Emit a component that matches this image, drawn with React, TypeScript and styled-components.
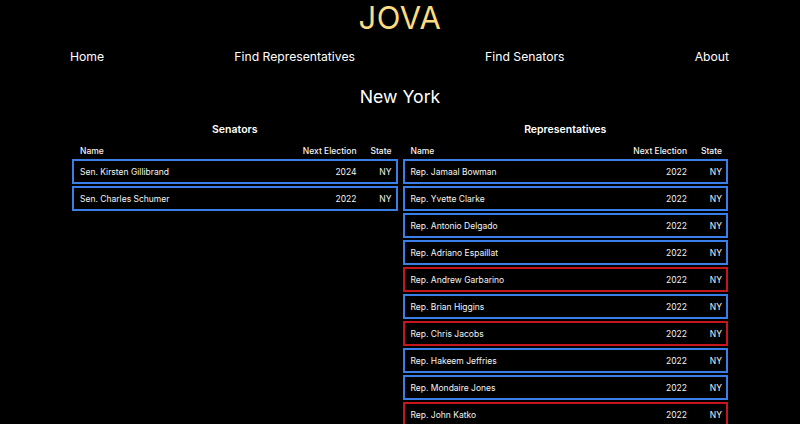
import React from "react";
import styled, { createGlobalStyle } from "styled-components";

const Global = createGlobalStyle`
  html, body { margin: 0; padding: 0; background: #000; }
  body { font-family: Inter, "Liberation Sans", sans-serif; color: #fff; }
`;

const Page = styled.div`
  width: 656px;
  margin: 0 auto;
  display: flex;
  flex-direction: column;
  align-items: stretch;
`;

const Title = styled.h1`
  margin: 0;
  padding-top: 1px;
  text-align: center;
  font-size: 31px;
  font-weight: 400;
  line-height: 34px;
  color: #fbdc80;
  letter-spacing: 0.5px;
`;

const Nav = styled.nav`
  display: flex;
  justify-content: space-between;
  padding: 13px 0 0 0;
  margin: 0 -1px 0 -2px;
`;

const NavLink = styled.a`
  font-size: 12.2px;
  line-height: 18px;
  color: #fff;
  text-decoration: none;
`;

const StateName = styled.h2`
  margin: 19px 0 0;
  text-align: center;
  font-size: 17.7px;
  font-weight: 400;
  line-height: 24px;
`;

const Tables = styled.div`
  display: grid;
  grid-template-columns: 1fr 1fr;
  column-gap: 5px;
  margin-top: 14px;
`;

const Column = styled.section`
  display: flex;
  flex-direction: column;
  gap: 2px;
`;

const Caption = styled.div`
  text-align: center;
  font-size: 10.5px;
  font-weight: 600;
  line-height: 14px;
  margin-bottom: 6px;
`;

const Grid = styled.div<{ $head?: boolean; $party?: "D" | "R" }>`
  display: grid;
  grid-template-columns: 1fr 90px 35px;
  align-items: center;
  padding: ${(p) => (p.$head ? "0 6px 0 8px" : "0 4px 0 6px")};
  font-size: 8.5px;
  color: #f4f4f4;
  font-weight: ${(p) => (p.$head ? 500 : 400)};
  height: ${(p) => (p.$head ? "12px" : "21px")};
  border: ${(p) =>
    p.$party ? `2px solid ${p.$party === "D" ? "#3a7ee8" : "#c4161c"}` : "none"};
  & > span:not(:first-child) { text-align: right; }
`;

type Person = { name: string; year: string; party: "D" | "R" };

const senators: Person[] = [
  { name: "Sen. Kirsten Gillibrand", year: "2024", party: "D" },
  { name: "Sen. Charles Schumer", year: "2022", party: "D" },
];

const reps: Person[] = [
  { name: "Rep. Jamaal Bowman", year: "2022", party: "D" },
  { name: "Rep. Yvette Clarke", year: "2022", party: "D" },
  { name: "Rep. Antonio Delgado", year: "2022", party: "D" },
  { name: "Rep. Adriano Espaillat", year: "2022", party: "D" },
  { name: "Rep. Andrew Garbarino", year: "2022", party: "R" },
  { name: "Rep. Brian Higgins", year: "2022", party: "D" },
  { name: "Rep. Chris Jacobs", year: "2022", party: "R" },
  { name: "Rep. Hakeem Jeffries", year: "2022", party: "D" },
  { name: "Rep. Mondaire Jones", year: "2022", party: "D" },
  { name: "Rep. John Katko", year: "2022", party: "R" },
  { name: "Rep. Chris Lee", year: "2022", party: "R" },
];

function Table({ title, people }: { title: string; people: Person[] }) {
  return (
    <Column>
      <Caption>{title}</Caption>
      <Grid $head>
        <span>Name</span>
        <span>Next Election</span>
        <span>State</span>
      </Grid>
      {people.map((p) => (
        <Grid key={p.name} $party={p.party}>
          <span>{p.name}</span>
          <span>{p.year}</span>
          <span>NY</span>
        </Grid>
      ))}
    </Column>
  );
}

export default function App() {
  return (
    <>
      <Global />
      <Page>
        <Title>JOVA</Title>
        <Nav>
          <NavLink href="#">Home</NavLink>
          <NavLink href="#">Find Representatives</NavLink>
          <NavLink href="#">Find Senators</NavLink>
          <NavLink href="#">About</NavLink>
        </Nav>
        <StateName>New York</StateName>
        <Tables>
          <Table title="Senators" people={senators} />
          <Table title="Representatives" people={reps} />
        </Tables>
      </Page>
    </>
  );
}
